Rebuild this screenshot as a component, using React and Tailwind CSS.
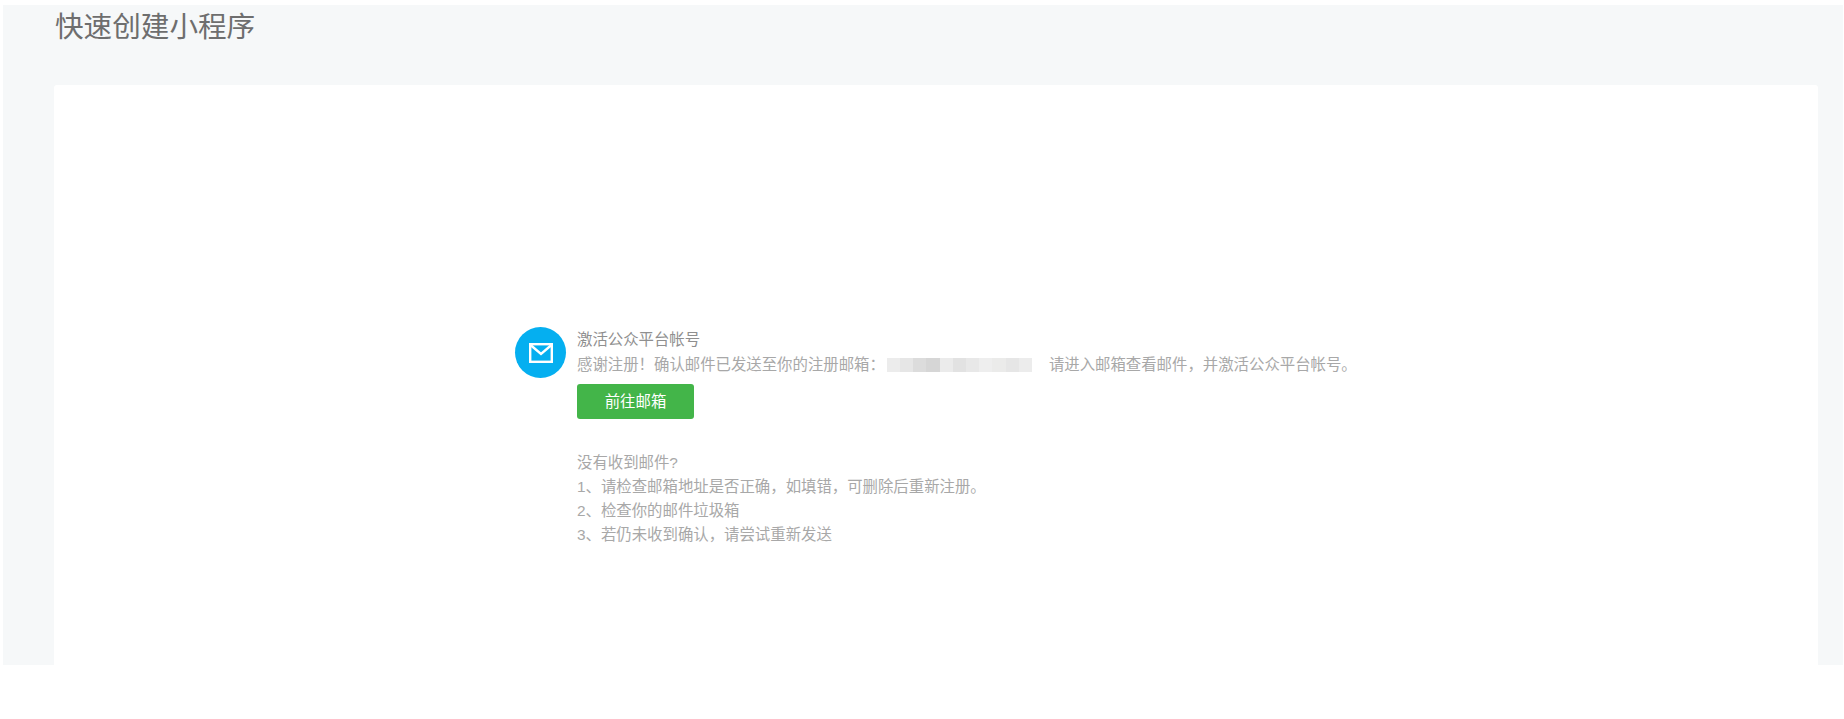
import React from 'react';

const blurCells = ['bg-[#ececec]', 'bg-[#e6e6e6]', 'bg-[#dcdcdc]', 'bg-[#d6d6d6]', 'bg-[#ebebeb]', 'bg-[#e2e2e2]', 'bg-[#e8e8e8]', 'bg-[#eeeeee]', 'bg-[#ebebea]', 'bg-[#e6e6e6]', 'bg-[#ececec]'];

const tips = [
    '没有收到邮件?',
    '1、请检查邮箱地址是否正确\uFF0C如填错\uFF0C可删除后重新注册。',
    '2、检查你的邮件垃圾箱',
    '3、若仍未收到确认\uFF0C请尝试重新发送',
];

const App = () => {
    return (
        <div className="h-[719px] bg-white pt-[5px] pl-[3px] pr-px font-['Liberation_Sans','Noto_Sans_CJK_SC',sans-serif]">
            <div className="h-[660px] bg-[#f6f8f9] pl-[51px] pr-[25px] overflow-hidden">
                <h1 className="h-[80px] pl-px pt-[3px] text-[28.6px] leading-[38px] font-normal text-[#6e6e6e]">快速创建小程序</h1>
                <div className="h-[580px] bg-white rounded-t-[3px] pl-[461px] pt-[242px]">
                    <div className="flex">
                        <div className="w-[51px] h-[51px] rounded-full bg-[#05aff0] flex items-center justify-center shrink-0">
                            <svg width="24" height="20" viewBox="0 0 24 20" fill="none" stroke="white" strokeWidth="2.4">
                                <rect x="1.2" y="1.2" width="21.6" height="17.6" />
                                <path d="M1.5 2 L12 11 L22.5 2" />
                            </svg>
                        </div>
                        <div className="ml-[11px] pt-px text-[15.4px] text-[#a8a8a8]">
                            <p className="h-[24px] leading-[24px] text-[#8f8f8f]">激活公众平台帐号</p>
                            <div className="flex items-center h-[25px]">
                                <span className="leading-[25px]">感谢注册{'\uFF01'}确认邮件已发送至你的注册邮箱{'\uFF1A'}</span>
                                <span className="flex w-[145px] h-[14px] ml-[2px] shrink-0">
                                    {blurCells.map((c, i) => (
                                        <span key={i} className={`flex-1 ${c}`} />
                                    ))}
                                </span>
                                <span className="ml-[17px] leading-[25px]">请进入邮箱查看邮件{'\uFF0C'}并激活公众平台帐号。</span>
                            </div>
                            <button className="mt-[7px] block w-[117px] h-[35px] rounded-[3px] bg-[#43b549] text-white text-[15.4px] text-center">前往邮箱</button>
                            <div className="mt-[32px] leading-[24px]">
                                {tips.map((t) => (
                                    <p key={t}>{t}</p>
                                ))}
                            </div>
                        </div>
                    </div>
                </div>
            </div>
        </div>
    );
};

export default App;
